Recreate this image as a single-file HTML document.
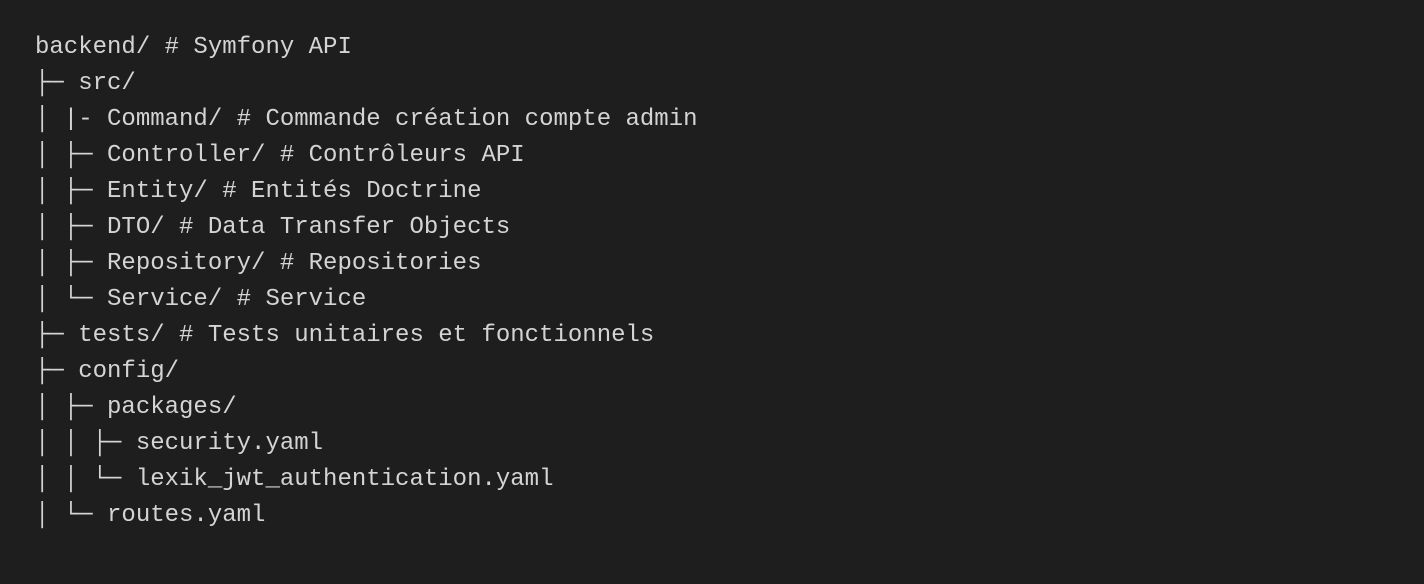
<!DOCTYPE html>
<html><head><style>
html,body{margin:0;padding:0;background:#1e1e1e;width:1424px;height:584px;overflow:hidden}
pre{margin:0;padding:30px 0 0 35px;font-family:"Liberation Mono","DejaVu Sans Mono",monospace;font-size:24px;line-height:36px;color:#d4d4d4}
</style></head><body><pre>backend/ # Symfony API
├─ src/
│ |- Command/ # Commande création compte admin
│ ├─ Controller/ # Contrôleurs API
│ ├─ Entity/ # Entités Doctrine
│ ├─ DTO/ # Data Transfer Objects
│ ├─ Repository/ # Repositories
│ └─ Service/ # Service
├─ tests/ # Tests unitaires et fonctionnels
├─ config/
│ ├─ packages/
│ │ ├─ security.yaml
│ │ └─ lexik_jwt_authentication.yaml
│ └─ routes.yaml</pre></body></html>
